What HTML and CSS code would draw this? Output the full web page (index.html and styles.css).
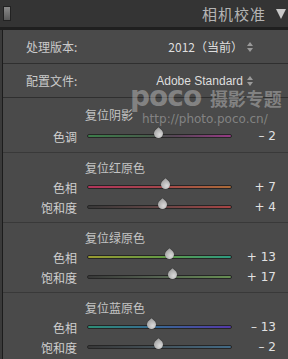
FILE: index.html
```html
<!DOCTYPE html>
<html lang="zh">

<head>
    <meta charset="UTF-8">
    <meta name="viewport" content="width=device-width, initial-scale=1.0">
    <title>相机校准</title>
    <link rel="stylesheet" href="styles.css">
</head>

<body>
    <div class="app">
        <header class="header">
            <span class="toggle"></span>
            <span class="title">相机校准</span>
            <span class="caret"></span>
        </header>

        <main class="panel">
            <div class="field">
                <span class="field-label">处理版本:</span>
                <span class="field-value">2012（当前）<span class="updown"></span></span>
            </div>
            <div class="field">
                <span class="field-label">配置文件:</span>
                <span class="field-value latin">Adobe Standard<span class="updown"></span></span>
            </div>

            <section class="group group-shadow">
                <h3 class="group-title">复位阴影</h3>
                <div class="slider-row">
                    <span class="slider-label">色调</span>
                    <div class="track track-tint"><span class="thumb" style="left: 49.3%"></span></div>
                    <span class="slider-value">– 2</span>
                </div>
            </section>

            <section class="group">
                <h3 class="group-title">复位红原色</h3>
                <div class="slider-row">
                    <span class="slider-label">色相</span>
                    <div class="track track-red-hue"><span class="thumb" style="left: 53.5%"></span></div>
                    <span class="slider-value">+ 7</span>
                </div>
                <div class="slider-row">
                    <span class="slider-label">饱和度</span>
                    <div class="track track-red-sat"><span class="thumb" style="left: 52%"></span></div>
                    <span class="slider-value">+ 4</span>
                </div>
            </section>

            <section class="group">
                <h3 class="group-title">复位绿原色</h3>
                <div class="slider-row">
                    <span class="slider-label">色相</span>
                    <div class="track track-green-hue"><span class="thumb" style="left: 56.5%"></span></div>
                    <span class="slider-value">+ 13</span>
                </div>
                <div class="slider-row">
                    <span class="slider-label">饱和度</span>
                    <div class="track track-green-sat"><span class="thumb" style="left: 58.5%"></span></div>
                    <span class="slider-value">+ 17</span>
                </div>
            </section>

            <section class="group">
                <h3 class="group-title">复位蓝原色</h3>
                <div class="slider-row">
                    <span class="slider-label">色相</span>
                    <div class="track track-blue-hue"><span class="thumb" style="left: 44%"></span></div>
                    <span class="slider-value">– 13</span>
                </div>
                <div class="slider-row">
                    <span class="slider-label">饱和度</span>
                    <div class="track track-blue-sat"><span class="thumb" style="left: 49%"></span></div>
                    <span class="slider-value">– 2</span>
                </div>
            </section>
        </main>

        <div class="watermark">
            <div class="wm-logo">poco <span class="wm-cn">摄影专题</span></div>
            <div class="wm-url">http://photo.poco.cn/</div>
        </div>
    </div>
</body>

</html>
```

FILE: styles.css
```css
body {
    margin: 0;
    padding: 0;
    background-color: #3a3a3a;
    font-family: "Noto Sans CJK SC", "Liberation Sans", sans-serif;
    color: #cacaca;
    font-size: 12px;
    overflow: hidden;
}

.app {
    position: relative;
    width: 288px;
    height: 359px;
}

.header {
    height: 27px;
    display: flex;
    align-items: center;
    background-color: #343434;
    border-bottom: 3px solid #1f1f1f;
}

.toggle {
    width: 6px;
    height: 13px;
    margin-left: 3px;
    border: 1px solid #222;
    background: linear-gradient(#8a8a8a, #5a5a5a);
}

.title {
    margin-left: auto;
    font-size: 15px;
    letter-spacing: 1px;
    color: #b4b4b4;
}

.caret {
    width: 0;
    height: 0;
    margin: 0 2px 0 10px;
    border-left: 5px solid transparent;
    border-right: 5px solid transparent;
    border-top: 10px solid #c8c8c8;
}

.panel {
    margin-left: 2px;
    border-left: 1px solid #1c1c1c;
    background-color: #4a4a4a;
    height: 329px;
}

.field {
    height: 33px;
    display: flex;
    align-items: center;
    justify-content: space-between;
    padding: 0 34px 0 23px;
    border-bottom: 1px solid #2f2f2f;
}

.field-value {
    display: flex;
    align-items: center;
    color: #dedede;
}

.latin {
    font-family: "Liberation Sans", sans-serif;
    font-size: 12px;
}

.updown {
    position: relative;
    width: 7px;
    height: 10px;
    margin-left: 4px;
}

.updown::before,
.updown::after {
    content: "";
    position: absolute;
    left: 0;
    border-left: 3px solid transparent;
    border-right: 3px solid transparent;
}

.updown::before {
    top: 0;
    border-bottom: 4px solid #9a9a9a;
}

.updown::after {
    bottom: 0;
    border-top: 4px solid #9a9a9a;
}

.group {
    padding: 6px 0 5px;
    border-bottom: 1px solid #393939;
}

.group:last-child {
    border-bottom: none;
}

.group-title {
    margin: 0 0 0 82px;
    font-size: 12px;
    font-weight: normal;
    line-height: 18px;
    color: #c4c4c4;
}

.group-shadow {
    padding: 8px 0 6px;
}

.group-shadow .group-title {
    margin-bottom: 2px;
}

.slider-row {
    height: 20px;
    display: flex;
    align-items: center;
}

.slider-label {
    width: 74px;
    text-align: right;
    color: #cfcfcf;
}

.track {
    position: relative;
    width: 143px;
    height: 2px;
    margin-left: 10px;
    border: 1px solid #262626;
    border-radius: 2px;
}

.track-tint {
    background: linear-gradient(to right, #3c7e4a, #465e4a 40%, #564656 60%, #963a84);
}

.track-red-hue {
    background: linear-gradient(to right, #b2345a, #a4464c 50%, #aa6a38);
}

.track-red-sat {
    background: linear-gradient(to right, #383838, #644646 50%, #a84444);
}

.track-green-hue {
    background: linear-gradient(to right, #9a9a30, #669a44 50%, #2c9a80);
}

.track-green-sat {
    background: linear-gradient(to right, #383838, #566452 50%, #668e52);
}

.track-blue-hue {
    background: linear-gradient(to right, #2c8e76, #386694 50%, #5438aa);
}

.track-blue-sat {
    background: linear-gradient(to right, #383838, #44525a 50%, #426a86);
}

.thumb {
    position: absolute;
    top: -6px;
    width: 9px;
    height: 9px;
    margin-left: -4px;
    background: radial-gradient(circle at 50% 70%, #dadada, #9c9c9c);
    border-radius: 50% 0 50% 50%;
    transform: rotate(-45deg);
    box-shadow: 0 0 1px #222;
}

.slider-value {
    width: 44px;
    text-align: right;
    font-family: "DejaVu Sans", sans-serif;
    font-size: 12px;
    color: #e2e2e2;
    white-space: pre;
}

.watermark {
    position: absolute;
    left: 130px;
    top: 85px;
    color: rgba(255, 255, 255, 0.32);
    pointer-events: none;
}

.wm-logo {
    font-family: "DejaVu Sans", sans-serif;
    font-size: 28px;
    font-weight: bold;
    line-height: 24px;
    letter-spacing: -1px;
}

.wm-cn {
    font-family: "Noto Sans CJK SC", sans-serif;
    font-size: 18px;
    font-weight: bold;
    letter-spacing: 0;
}

.wm-url {
    margin: 2px 0 0 12px;
    font-family: "DejaVu Sans", sans-serif;
    font-size: 12px;
}
```
